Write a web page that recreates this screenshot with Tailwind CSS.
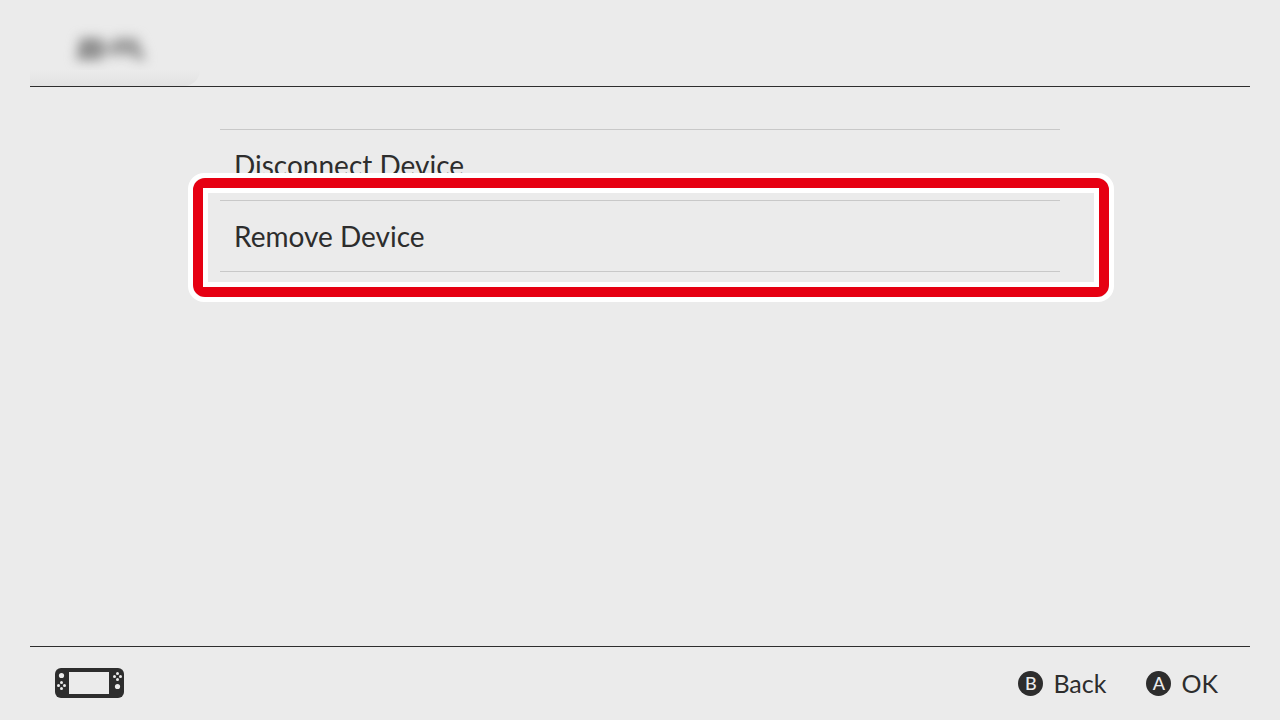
<!DOCTYPE html>
<html lang="en">
<head>
    <meta charset="UTF-8">
    <meta name="viewport" content="width=device-width, initial-scale=1.0">
    <title>Device Settings</title>
    <script src="https://cdn.jsdelivr.net/npm/@tailwindcss/browser@4"></script>
</head>
<body class="bg-[#ebebeb] text-[#2d2d2d] font-['Lato',sans-serif] min-h-screen flex flex-col px-[30px]">
    <header class="h-[87px] flex flex-col justify-between border-b border-[#2d2d2d] overflow-hidden">
        <!-- device name, hidden -->
        <svg class="w-[170px] h-[70px] shrink-0" viewBox="0 0 170 70" aria-hidden="true">
            <defs>
                <filter id="soft" x="-50%" y="-100%" width="200%" height="300%" color-interpolation-filters="sRGB">
                    <feGaussianBlur stdDeviation="6"/>
                </filter>
            </defs>
            <g filter="url(#soft)">
                <path d="M50 38h22v22H46z" fill="#909090"/>
                <path d="M72 42h12v14H72z" fill="#b8b8b8"/>
                <path d="M84 38h23l9 22h-9l-5-5H82z" fill="#a0a0a0"/>
            </g>
        </svg>
        <div class="w-[170px] h-4 bg-linear-to-b from-[#ebebeb] to-[#e2e2e2] rounded-br-2xl"></div>
    </header>

    <main class="grow pt-[42px]">
        <ul class="w-full max-w-[840px] mx-auto border-t border-[#c8c8c8]">
            <li class="border-b border-[#c8c8c8]">
                <button class="w-full h-[70px] px-[14px] pb-px text-left text-[28px] leading-8">Disconnect Device</button>
            </li>
            <li class="relative border-b border-[#c8c8c8]">
                <button class="w-full h-[70px] px-[14px] pb-px text-left text-[28px] leading-8">Remove Device</button>
                <!-- highlight frame -->
                <div class="absolute -left-8 -right-[54px] -top-7 -bottom-[31px] border-5 border-white rounded-2xl pointer-events-none">
                    <div class="h-full border-10 border-[#e60012] rounded-xl">
                        <div class="h-full border-5 border-white"></div>
                    </div>
                </div>
            </li>
        </ul>
    </main>

    <footer class="h-[74px] flex items-center justify-between border-t border-[#2d2d2d] pl-[25px] pr-8 pb-px">
        <svg class="w-[69px] h-[30px]" viewBox="0 0 69 30" fill="none" role="img" aria-label="Console">
            <rect width="69" height="30" rx="6" fill="#2d2d2d"/>
            <rect x="14" y="4" width="40" height="22" fill="#ebebeb"/>
            <g fill="#ebebeb">
                <circle cx="6.5" cy="7.5" r="2.6"/>
                <circle cx="6.5" cy="14.5" r="1.5"/>
                <circle cx="3.5" cy="17.5" r="1.5"/>
                <circle cx="9.5" cy="17.5" r="1.5"/>
                <circle cx="6.5" cy="20.5" r="1.5"/>
                <circle cx="62.5" cy="5.5" r="1.5"/>
                <circle cx="59.5" cy="8.5" r="1.5"/>
                <circle cx="65.5" cy="8.5" r="1.5"/>
                <circle cx="62.5" cy="11.5" r="1.5"/>
                <circle cx="62.5" cy="18.5" r="2.6"/>
            </g>
        </svg>
        <div class="flex items-center gap-10">
            <button class="flex items-center gap-[10px] text-[25px] leading-8">
                <span class="size-[25px] rounded-full bg-[#2d2d2d] text-[#ebebeb] text-lg leading-[25px] font-medium">B</span>
                Back
            </button>
            <button class="flex items-center gap-[10px] text-[25px] leading-8">
                <span class="size-[25px] rounded-full bg-[#2d2d2d] text-[#ebebeb] text-lg leading-[25px] font-medium">A</span>
                OK
            </button>
        </div>
    </footer>
</body>
</html>
